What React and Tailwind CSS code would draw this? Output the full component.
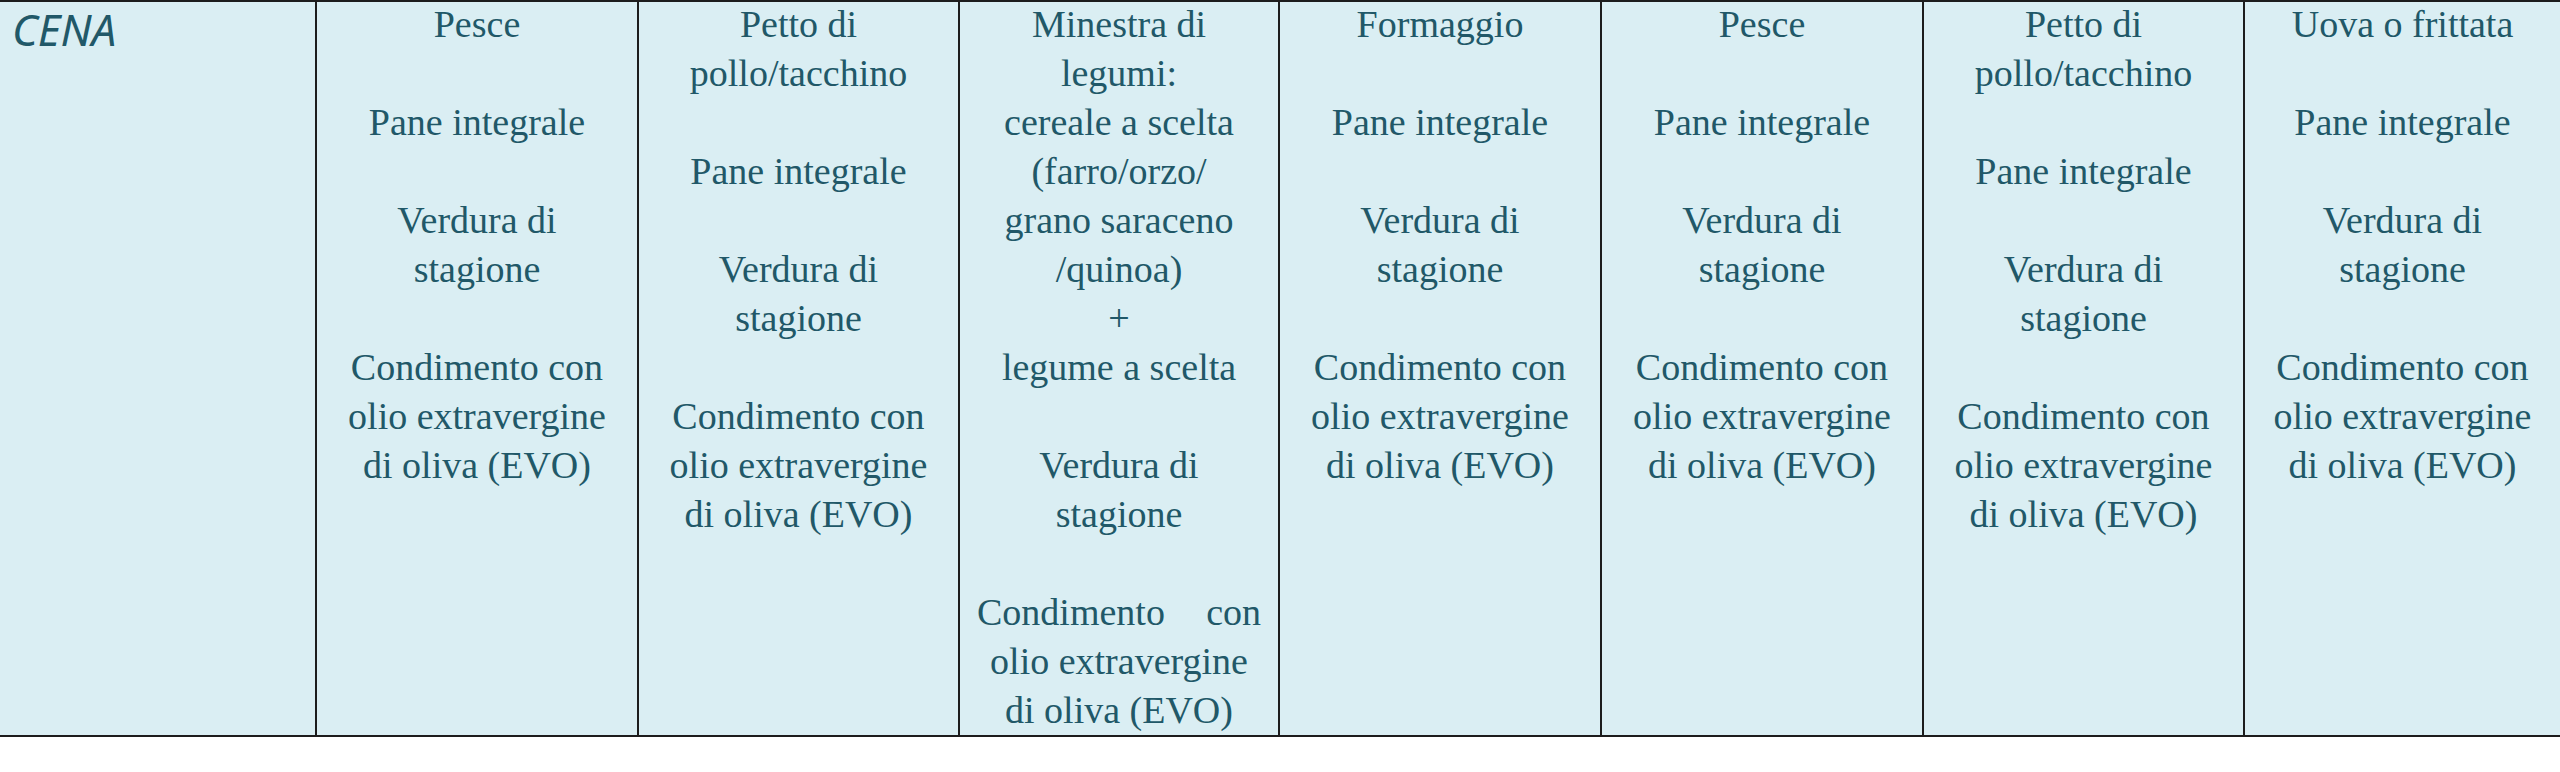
import React from "react";

const B = "";
const fish = ["Pesce", B, "Pane integrale", B, "Verdura di", "stagione", B, "Condimento con", "olio extravergine", "di oliva (EVO)"];
const chicken = ["Petto di", "pollo/tacchino", B, "Pane integrale", B, "Verdura di", "stagione", B, "Condimento con", "olio extravergine", "di oliva (EVO)"];
const soup = ["Minestra di", "legumi:", "cereale a scelta", "(farro/orzo/", "grano saraceno", "/quinoa)", "+", "legume a scelta", B, "Verdura di", "stagione", B, "JUSTIFY", "olio extravergine", "di oliva (EVO)"];
const cheese = ["Formaggio", B, "Pane integrale", B, "Verdura di", "stagione", B, "Condimento con", "olio extravergine", "di oliva (EVO)"];
const eggs = ["Uova o frittata", B, "Pane integrale", B, "Verdura di", "stagione", B, "Condimento con", "olio extravergine", "di oliva (EVO)"];

const columns = [fish, chicken, soup, cheese, fish, chicken, eggs];

function Cell({ lines }) {
  return (
    <div className="border-l-2 border-[#1c1c1c] overflow-hidden">
      <div className="-mt-[2px] flex flex-col text-center">
        {lines.map((l, i) =>
          l === "JUSTIFY" ? (
            <div key={i} className="h-[49px] leading-[49px] px-[17px] flex justify-between">
              <span>Condimento</span>
              <span>con</span>
            </div>
          ) : (
            <div key={i} className="h-[49px] leading-[49px] whitespace-nowrap">
              {l}
            </div>
          )
        )}
      </div>
    </div>
  );
}

export default function App() {
  return (
    <div className="w-[2560px] h-[772px] bg-white overflow-hidden">
      <div
        className="h-[737px] grid grid-cols-[315px_322px_321px_320px_322px_322px_321px_1fr] bg-[#DAEEF3] border-t-2 border-b-2 border-[#1c1c1c] text-[#215868] text-[38px]"
        style={{ fontFamily: '"Liberation Serif", "Times New Roman", serif' }}
      >
        <div className="pl-[12px] pt-[3px]">
          <span
            className="italic text-[44px] leading-[44px]"
            style={{ fontFamily: '"Noto Sans", sans-serif' }}
          >
            CENA
          </span>
        </div>
        {columns.map((c, i) => (
          <Cell key={i} lines={c} />
        ))}
      </div>
    </div>
  );
}
